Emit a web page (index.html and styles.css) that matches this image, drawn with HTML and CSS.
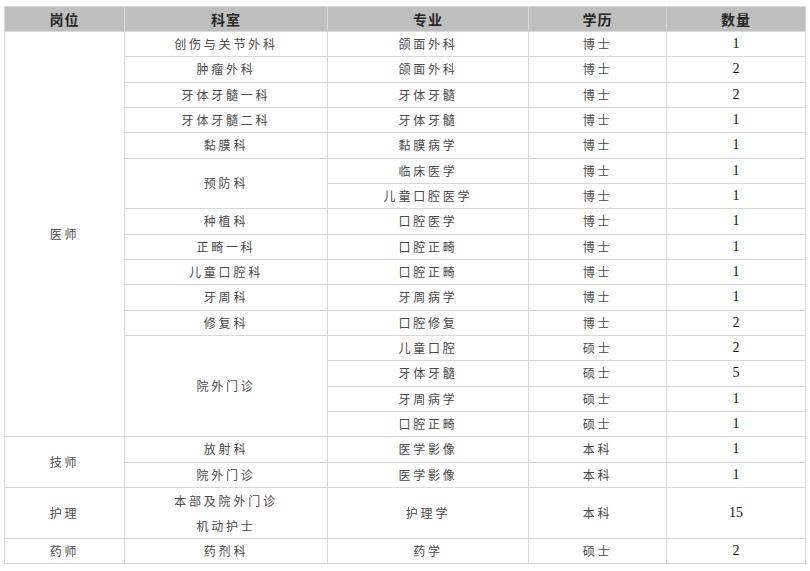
FILE: index.html
```html
<!DOCTYPE html>
<html lang="zh-CN">
<head>
<meta charset="utf-8">
<title>招聘岗位</title>
<link rel="stylesheet" href="styles.css">
</head>
<body>
<div class="page">
<table class="jobs">
<colgroup>
<col class="c1"><col class="c2"><col class="c3"><col class="c4"><col class="c5">
</colgroup>
<thead>
<tr><th>岗位</th><th>科室</th><th>专业</th><th>学历</th><th>数量</th></tr>
</thead>
<tbody>
<tr><td rowspan="16">医师</td><td>创伤与关节外科</td><td>颌面外科</td><td>博士</td><td class="num">1</td></tr>
<tr><td>肿瘤外科</td><td>颌面外科</td><td>博士</td><td class="num">2</td></tr>
<tr><td>牙体牙髓一科</td><td>牙体牙髓</td><td>博士</td><td class="num">2</td></tr>
<tr><td>牙体牙髓二科</td><td>牙体牙髓</td><td>博士</td><td class="num">1</td></tr>
<tr><td>黏膜科</td><td>黏膜病学</td><td>博士</td><td class="num">1</td></tr>
<tr><td rowspan="2">预防科</td><td>临床医学</td><td>博士</td><td class="num">1</td></tr>
<tr><td>儿童口腔医学</td><td>博士</td><td class="num">1</td></tr>
<tr><td>种植科</td><td>口腔医学</td><td>博士</td><td class="num">1</td></tr>
<tr><td>正畸一科</td><td>口腔正畸</td><td>博士</td><td class="num">1</td></tr>
<tr><td>儿童口腔科</td><td>口腔正畸</td><td>博士</td><td class="num">1</td></tr>
<tr><td>牙周科</td><td>牙周病学</td><td>博士</td><td class="num">1</td></tr>
<tr><td>修复科</td><td>口腔修复</td><td>博士</td><td class="num">2</td></tr>
<tr><td rowspan="4">院外门诊</td><td>儿童口腔</td><td>硕士</td><td class="num">2</td></tr>
<tr><td>牙体牙髓</td><td>硕士</td><td class="num">5</td></tr>
<tr><td>牙周病学</td><td>硕士</td><td class="num">1</td></tr>
<tr><td>口腔正畸</td><td>硕士</td><td class="num">1</td></tr>
<tr><td rowspan="2">技师</td><td>放射科</td><td>医学影像</td><td>本科</td><td class="num">1</td></tr>
<tr><td>院外门诊</td><td>医学影像</td><td>本科</td><td class="num">1</td></tr>
<tr class="tall"><td>护理</td><td><div class="line">本部及院外门诊</div><div class="line">机动护士</div></td><td>护理学</td><td>本科</td><td class="num">15</td></tr>
<tr><td>药师</td><td>药剂科</td><td>药学</td><td>硕士</td><td class="num">2</td></tr>
</tbody>
</table>
</div>
</body>
</html>
```
FILE: styles.css
```css
html, body {
  margin: 0;
  padding: 0;
  background: #ffffff;
}
.page {
  padding: 6px 5px 0 4px;
}
.jobs {
  border-collapse: collapse;
  width: 801px;
  table-layout: fixed;
  font-family: "Noto Sans CJK SC", "Noto Sans", sans-serif;
}
.c1 { width: 120px; }
.c2 { width: 203px; }
.c3 { width: 201px; }
.c4 { width: 138px; }
.c5 { width: 139px; }
.jobs th,
.jobs td {
  border: 1px solid #d9d9d9;
  padding: 0;
  text-align: center;
  vertical-align: middle;
}
.jobs th {
  background: #bfbfbf;
  color: #262626;
  font-size: 14px;
  font-weight: bold;
  letter-spacing: 1px;
  height: 24px;
  line-height: 24px;
}
.jobs tbody tr {
  height: 25.33px;
}
.jobs tbody tr.tall {
  height: 50.66px;
}
.jobs td {
  color: #4a4a4a;
  font-size: 12px;
  letter-spacing: 2.8px;
  line-height: 24px;
}
.jobs td.num {
  font-family: "Liberation Serif", "Times New Roman", serif;
  font-size: 14px;
  color: #111111;
  letter-spacing: 0;
}
.line {
  line-height: 25px;
}
```
